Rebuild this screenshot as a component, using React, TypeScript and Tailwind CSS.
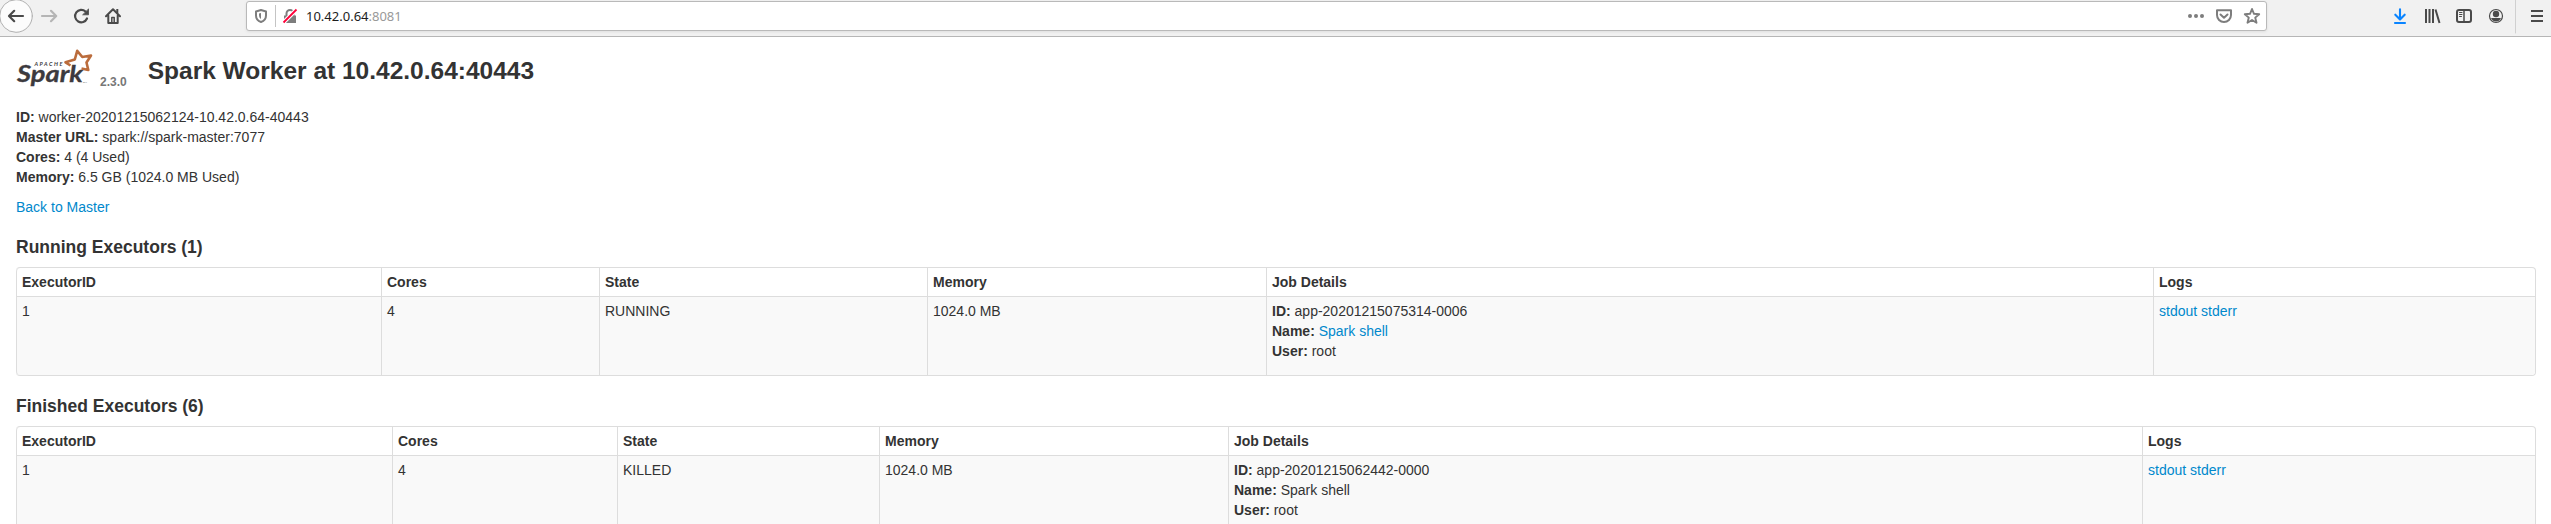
import type { ReactNode } from "react";

function Logo() {
  return (
    <svg width="78" height="40" viewBox="0 0 78 40" className="shrink-0">
      <g fontFamily="Lato, 'Open Sans', sans-serif" fill="#3c3a3e">
        <text x="18.500" y="18.800" fontSize="5.500" fontWeight="700" fontStyle="italic" textLength="28" lengthAdjust="spacing">APACHE</text>
        <text x="1" y="35" fontSize="23.500" fontWeight="700" fontStyle="italic" textLength="66" lengthAdjust="spacingAndGlyphs" stroke="#3c3a3e" strokeWidth="0.3">Spark</text>
        <text x="67" y="35.500" fontSize="2.500">TM</text>
      </g>
      <path d="M54.500 18.500L49.500 15.300L58.800 12.500L61.200 3.800L66.300 10L75 8.500L70.500 15.500L72.300 23L65.500 21.500" fill="none" stroke="#bb6c3c" strokeWidth="2.600" strokeLinejoin="round" />
    </svg>
  );
}

function Toolbar() {
  return (
    <div className="flex h-[37px] items-start border-b border-[#b6b6b6] bg-[#f1f1f1]">
      <svg width="130" height="36" viewBox="0 0 130 36" className="shrink-0" fill="none" stroke="#4a4a4a" strokeWidth="2" strokeLinecap="round" strokeLinejoin="round">
        <circle cx="16" cy="16" r="16.300" fill="#fcfcfc" stroke="#b0b0b0" strokeWidth="1" />
        <path d="M23 16H9.200M14.200 10.800L9 16l5.200 5.200" strokeWidth="2.200" />
        <path d="M42 16h14M51 10.800l5.200 5.200-5.200 5.200" stroke="#b5b5b5" strokeWidth="2.200" />
        <path d="M87 18.500A6.200 6.200 0 1 1 85.500 11.500" strokeWidth="2.200" />
        <path d="M88.500 9.300v5.500H83z" fill="#4a4a4a" strokeWidth="0.800" />
        <path d="M106 16.300l7-7 7 7M108.300 15.500V23h9.400v-7.500" />
        <path d="M117.300 9v4" strokeLinecap="butt" />
        <path d="M111.800 22.500v-5h2.400v5" strokeWidth="1.500" />
      </svg>
      <div className="mt-[1px] ml-[116px] flex h-[30px] w-[2021px] items-center rounded-[3px] border border-[#b9b9b9] bg-white shadow-[0_1px_3px_rgba(0,0,0,0.08)]">
        <svg width="52" height="28" viewBox="247 2 52 28" className="shrink-0" fill="none">
          <path d="M261 10l-5 1.500v4c0 3 2 5.500 5 6.500 3-1 5-3.500 5-6.500v-4z" stroke="#7d7d7d" strokeWidth="2" strokeLinejoin="round" />
          <path d="M261 13v6c-1.300-.7-2-2-2-4v-1.500z" fill="#7d7d7d" />
          <path d="M275.500 5v22" stroke="#c4c4c4" />
          <path d="M284 15.500h12v7.500h-12z" fill="#7d7d7d" />
          <path d="M286.500 16v-2.500a3.500 3.500 0 0 1 7 0V16" stroke="#7d7d7d" strokeWidth="2" />
          <path d="M284 22L296.500 9.500" stroke="#fff" strokeWidth="4" />
          <path d="M283.500 22.500L296.500 9.500" stroke="#ff0039" strokeWidth="1.800" />
        </svg>
        <span className="ml-[7px] font-['Noto_Sans'] text-[13px] leading-[20px] text-[#1c1c1c]">10.42.0.64<span className="text-[#999]">:8081</span></span>
        <svg width="84" height="28" viewBox="2182 2 84 28" className="ml-auto shrink-0" fill="none" stroke="#7d7d7d" strokeWidth="2" strokeLinejoin="round" strokeLinecap="round">
          <g fill="#7d7d7d" stroke="none"><circle cx="2190" cy="16" r="2" /><circle cx="2196" cy="16" r="2" /><circle cx="2202" cy="16" r="2" /></g>
          <path d="M2217 10.200h14v4.800a7 7 0 0 1-14 0zM2220.500 14.500l3.500 3.200 3.500-3.200" />
          <path d="M2252 9l2 4.800 5.200.4-4 3.400 1.300 5.200-4.500-2.800-4.500 2.800 1.300-5.200-4-3.400 5.200-.4z" strokeWidth="1.900" />
        </svg>
      </div>
      <svg width="164" height="36" viewBox="2387 0 164 36" className="ml-auto shrink-0" fill="none" stroke="#4a4a4a" strokeWidth="2" strokeLinecap="round" strokeLinejoin="round">
        <path d="M2400 9.200v10M2395.300 14.700l4.700 4.700 4.700-4.700M2395 23h10" stroke="#0a84ff" strokeWidth="2.100" />
        <path d="M2426 9v14M2429.500 9v14M2433 9v14M2435.500 9.500l4 13.500" strokeLinecap="butt" />
        <rect x="2457" y="10" width="14" height="12" rx="2" />
        <path d="M2464 10v12" strokeWidth="1.500" />
        <path d="M2459.500 12.500h2.500M2459.500 14.500h2.500M2459.500 16.500h2" strokeWidth="1" />
        <circle cx="2496" cy="16" r="6.500" strokeWidth="1.200" />
        <circle cx="2496" cy="14" r="3.200" fill="#4a4a4a" stroke="none" />
        <path d="M2491 18h10c-1 2.500-3 3.500-5 3.500s-4-1-5-3.500z" fill="#4a4a4a" stroke="none" />
        <path d="M2515.500 0v33" stroke="#d0d0d0" strokeWidth="1" />
        <path d="M2531 11h12M2531 16h12M2531 21h12" strokeLinecap="butt" />
      </svg>
    </div>
  );
}

function Link({ children }: { children: ReactNode }) {
  return <a href="#" className="text-[#0088cc]">{children}</a>;
}

function Field({ name, children }: { name: string; children: ReactNode }) {
  return <li><strong>{name}:</strong> {children}</li>;
}

const HEADERS = ["ExecutorID", "Cores", "State", "Memory", "Job Details", "Logs"];

interface TableProps {
  widths: number[];
  state: string;
  appId: string;
  appName: ReactNode;
}

function ExecutorTable({ widths, state, appId, appName }: TableProps) {
  const cells: ReactNode[] = [
    "1",
    "4",
    state,
    "1024.0 MB",
    <ul className="mb-[10px]">
      <Field name="ID">{appId}</Field>
      <Field name="Name">{appName}</Field>
      <Field name="User">root</Field>
    </ul>,
    <><Link>stdout</Link> <Link>stderr</Link></>,
  ];
  return (
    <table className="w-[2520px] table-fixed border-separate border-spacing-0 rounded-[4px] border border-l-0 border-[#ddd]">
      <colgroup>
        {widths.map((w, i) => <col key={i} style={{ width: w }} />)}
      </colgroup>
      <thead>
        <tr>
          {HEADERS.map((h) => (
            <th key={h} className="border-l border-[#ddd] p-[4px] pl-[5px] text-left font-bold first:rounded-tl-[4px]">{h}</th>
          ))}
        </tr>
      </thead>
      <tbody>
        <tr>
          {cells.map((c, i) => (
            <td key={i} className="border-t border-l border-[#ddd] bg-[#f9f9f9] p-[4px] pl-[5px] align-top first:rounded-bl-[4px] last:rounded-br-[4px]">{c}</td>
          ))}
        </tr>
      </tbody>
    </table>
  );
}

export default function App() {
  return (
    <div className="h-[524px] w-[2551px] overflow-hidden bg-white font-['Liberation_Sans',Arial,sans-serif] text-[14px] leading-[20px] text-[#333]">
      <Toolbar />
      <main className="pl-[16px]">
        <header className="flex h-[60px] items-start pt-[10px]">
          <Logo />
          <span className="mt-[25px] ml-[6px] text-[12px] leading-[20px] font-bold text-[#777]">2.3.0</span>
          <h3 className="mt-[4px] ml-[21px] text-[24.500px] leading-[40px] font-bold">Spark Worker at 10.42.0.64:40443</h3>
        </header>
        <ul className="mt-[10px]">
          <Field name="ID">worker-20201215062124-10.42.0.64-40443</Field>
          <Field name="Master URL">spark://spark-master:7077</Field>
          <Field name="Cores">4 (4 Used)</Field>
          <Field name="Memory">6.5 GB (1024.0 MB Used)</Field>
        </ul>
        <p className="mt-[10px]"><Link>Back to Master</Link></p>
        <h4 className="mt-[20px] mb-[10px] text-[17.500px] leading-[20px] font-bold">Running Executors (1)</h4>
        <ExecutorTable widths={[365, 218, 328, 339, 887, 382]} state="RUNNING" appId="app-20201215075314-0006" appName={<Link>Spark shell</Link>} />
        <h4 className="mt-[20px] mb-[10px] text-[17.500px] leading-[20px] font-bold">Finished Executors (6)</h4>
        <ExecutorTable widths={[376, 225, 262, 349, 914, 393]} state="KILLED" appId="app-20201215062442-0000" appName="Spark shell" />
      </main>
    </div>
  );
}
